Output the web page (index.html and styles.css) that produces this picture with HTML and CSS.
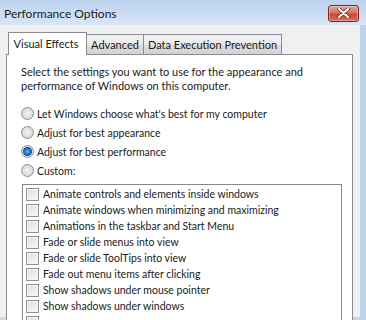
FILE: index.html
```html
<!DOCTYPE html>
<html lang="en">
<head>
  <meta charset="UTF-8">
  <title>Performance Options</title>
  <link rel="stylesheet" href="styles.css">
</head>
<body>
  <div class="window">
    <div class="titlebar">
      <span class="title">Performance Options</span>
      <button class="close-btn" type="button">
        <svg width="13" height="10" viewBox="0 0 13 10">
          <path d="M2 1 L11 9 M11 1 L2 9" stroke="#5a2a26" stroke-width="3.6" stroke-linecap="round"/>
          <path d="M2 1 L11 9 M11 1 L2 9" stroke="#fff" stroke-width="2.2" stroke-linecap="round"/>
        </svg>
      </button>
    </div>

    <div class="client">
      <div class="tabs">
        <div class="tab active">Visual Effects</div>
        <div class="tab tab-advanced">Advanced</div>
        <div class="tab tab-dep">Data Execution Prevention</div>
      </div>

      <div class="panel">
        <p class="intro">Select the settings you want to use for the appearance and performance of Windows on this computer.</p>

        <div class="options">
          <label class="radio"><span class="dot"></span>Let Windows choose what's best for my computer</label>
          <label class="radio"><span class="dot"></span>Adjust for best appearance</label>
          <label class="radio"><span class="dot checked"></span>Adjust for best performance</label>
          <label class="radio"><span class="dot"></span>Custom:</label>
        </div>

        <div class="listbox">
          <div class="item"><span class="box"></span>Animate controls and elements inside windows</div>
          <div class="item"><span class="box"></span>Animate windows when minimizing and maximizing</div>
          <div class="item"><span class="box"></span>Animations in the taskbar and Start Menu</div>
          <div class="item"><span class="box"></span>Fade or slide menus into view</div>
          <div class="item"><span class="box"></span>Fade or slide ToolTips into view</div>
          <div class="item"><span class="box"></span>Fade out menu items after clicking</div>
          <div class="item"><span class="box"></span>Show shadows under mouse pointer</div>
          <div class="item"><span class="box"></span>Show shadows under windows</div>
          <div class="item"><span class="box"></span></div>
        </div>
      </div>
    </div>
  </div>
</body>
</html>
```

FILE: styles.css
```css
* {
  margin: 0;
  padding: 0;
  box-sizing: border-box;
}

body {
  font-family: Lato, 'Open Sans', sans-serif;
  font-size: 11px;
  color: #1a1a1a;
  background: #bfd5ef;
  overflow: hidden;
}

.window {
  width: 366px;
  height: 320px;
  background: linear-gradient(90deg, #c9ddf2 0%, #d3e3f5 60%, #bcd3ee 100%);
  overflow: hidden;
}

.titlebar {
  height: 25px;
  display: flex;
  align-items: center;
  justify-content: space-between;
  padding: 0 7px 0 4px;
  background: linear-gradient(180deg, #bcd3ee 0%, #cadcf2 55%, #d9e7f6 100%);
}

.title {
  font-size: 12px;
  color: #1e1e1e;
  margin-top: 2px;
}

.close-btn {
  width: 31px;
  height: 17px;
  margin-top: 1px;
  border: 1px solid #6b2a24;
  border-radius: 3px;
  background: linear-gradient(180deg, #eaa595 0%, #d67060 45%, #c34a37 55%, #d6705c 100%);
  display: flex;
  align-items: center;
  justify-content: center;
  box-shadow: inset 0 0 0 1px rgba(255, 255, 255, 0.35);
}

.client {
  width: 360px;
  height: 292px;
  background: #f0f0f0;
  padding: 7px 0 0 6px;
}

.tabs {
  display: flex;
  align-items: flex-end;
  height: 22px;
  padding-left: 2px;
  position: relative;
  z-index: 1;
}

.tab {
  height: 20px;
  line-height: 19px;
  text-align: center;
  border: 1px solid #898c95;
  border-bottom: none;
  margin-left: -1px;
  background: linear-gradient(180deg, #f3f3f3 0%, #ebebeb 50%, #dedede 51%, #d2d2d2 100%);
  white-space: nowrap;
}

.tab.active {
  width: 79px;
  height: 23px;
  margin-left: 0;
  margin-bottom: -1px;
  padding: 1px 3px 0 0;
  background: #fff;
}

.tab-advanced {
  width: 58px;
}

.tab-dep {
  width: 139px;
}

.panel {
  width: 347px;
  height: 280px;
  background: #fff;
  border: 1px solid #898c95;
  padding: 10px 0 0 14px;
}

.intro {
  width: 300px;
  line-height: 14px;
}

.options {
  display: flex;
  flex-direction: column;
  margin-top: 11px;
  font-size: 10.5px;
}

.radio {
  display: flex;
  align-items: center;
  height: 19px;
  gap: 3px;
}

.dot {
  width: 13px;
  height: 13px;
  border-radius: 50%;
  border: 1px solid #8e8f8f;
  background: radial-gradient(circle at 50% 50%, #f4f4f4 0%, #dcdcdc 60%, #cfcfcf 100%);
}

.dot.checked {
  background: radial-gradient(circle at 50% 50%, #6fb7ec 0%, #1f6fc1 40%, #1b4f8f 55%, #e6e6e6 60%, #d8d8d8 100%);
}

.listbox {
  width: 320px;
  height: 140px;
  margin-top: 4px;
  margin-left: 1px;
  border: 1px solid #828790;
  padding: 1px 0 0 3px;
  font-size: 10.5px;
}

.item {
  display: flex;
  align-items: center;
  height: 16px;
  gap: 4px;
  white-space: nowrap;
}

.box {
  width: 13px;
  height: 13px;
  border: 1px solid #8e8f8f;
  background: linear-gradient(135deg, #dcdcdc 0%, #f0f0f0 70%, #fafafa 100%);
  box-shadow: inset 0 0 0 1px #f6f6f6;
}
```
